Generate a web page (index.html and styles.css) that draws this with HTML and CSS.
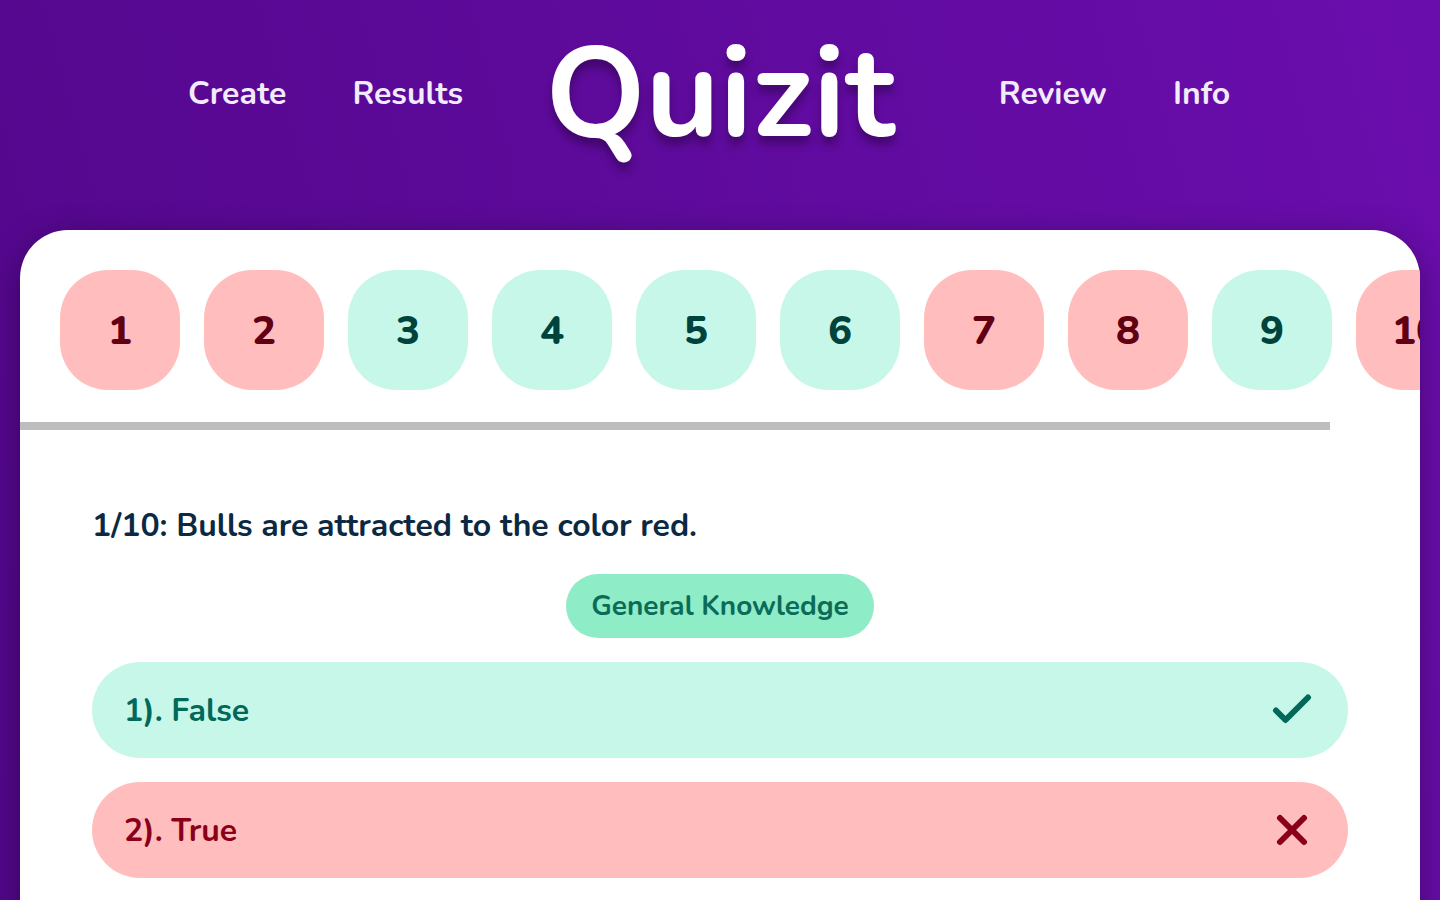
FILE: index.html
```html
<!DOCTYPE html>
<html lang="en">
<head>
<meta charset="utf-8">
<meta name="viewport" content="width=device-width, initial-scale=1">
<title>Quizit</title>
<link rel="stylesheet" href="styles.css">
</head>
<body>
<header class="header">
  <nav class="nav nav-left" aria-label="Quizzes">
    <a href="#create">Create</a>
    <a href="#results">Results</a>
  </nav>
  <h1 class="logo">Quizit</h1>
  <nav class="nav nav-right" aria-label="More">
    <a href="#review">Review</a>
    <a href="#info">Info</a>
  </nav>
</header>
<main class="card">
  <div class="strip">
    <button class="tile wrong" type="button">1</button>
    <button class="tile wrong" type="button">2</button>
    <button class="tile right" type="button">3</button>
    <button class="tile right" type="button">4</button>
    <button class="tile right" type="button">5</button>
    <button class="tile right" type="button">6</button>
    <button class="tile wrong" type="button">7</button>
    <button class="tile wrong" type="button">8</button>
    <button class="tile right" type="button">9</button>
    <button class="tile wrong" type="button">10</button>
  </div>
  <div class="track"><div class="thumb"></div></div>
  <section class="question">
    <h2 class="prompt">1/10: Bulls are attracted to the color red.</h2>
    <p class="category">General Knowledge</p>
    <ul class="answers">
      <li class="answer right">
        <span>1). False</span>
        <svg class="mark" viewBox="0 0 40 40" aria-hidden="true"><path d="M4 20.500 13.500 30 36 7.500"/></svg>
      </li>
      <li class="answer wrong">
        <span>2). True</span>
        <svg class="mark" viewBox="0 0 40 40" aria-hidden="true"><path d="M8 8 32 32M32 8 8 32"/></svg>
      </li>
    </ul>
  </section>
</main>
</body>
</html>
```
FILE: styles.css
```css
* {
  box-sizing: border-box;
}

body {
  margin: 0;
  min-height: 100vh;
  display: flex;
  flex-direction: column;
  overflow-x: hidden;
  font-family: Nunito, "Open Sans", sans-serif;
  color: #0b2942;
  background: linear-gradient(75deg, #52078a, #6a0dad);
}

.header {
  display: grid;
  grid-template-columns: 1fr auto 1fr;
  align-items: start;
  padding: 14px 0 56px;
}

.nav {
  display: flex;
  gap: 66px;
  padding-top: 58px;
}

.nav-left {
  justify-content: flex-end;
  padding-right: 82px;
}

.nav-right {
  padding-left: 104px;
}

.nav a {
  font-size: 32px;
  line-height: 44px;
  font-weight: 700;
  color: #f2ebfe;
  text-decoration: none;
}

.logo {
  margin: 0;
  font-size: 128px;
  line-height: 160px;
  font-weight: 700;
  color: #fff;
  text-shadow: 0 8px 8px rgba(0, 0, 0, 0.3);
}

.card {
  flex: 1;
  margin: 0 20px;
  overflow: hidden;
  background: #fff;
  border-radius: 48px 48px 0 0;
  box-shadow: 0 8px 32px rgba(0, 0, 0, 0.35);
}

.strip {
  display: flex;
  gap: 24px;
  padding: 40px 40px 32px;
}

.tile {
  flex: none;
  width: 120px;
  height: 120px;
  padding: 2px 0 0;
  border: 0;
  border-radius: 48px;
  font-family: inherit;
  font-size: 40px;
  font-weight: 800;
  cursor: pointer;
}

.right {
  background: #c6f7e8;
  color: #01685a;
}

.wrong {
  background: #ffbdbd;
  color: #8a0019;
}

.tile.right {
  color: #00433d;
}

.tile.wrong {
  color: #610013;
}

.track {
  height: 8px;
  padding-right: 90px;
}

.thumb {
  height: 8px;
  background: #bdbdbd;
}

.question {
  padding: 72px;
}

.prompt {
  margin: 0 0 24px;
  font-size: 32px;
  line-height: 48px;
  font-weight: 700;
}

.category {
  width: fit-content;
  margin: 0 auto 24px;
  padding: 0 25px;
  border-radius: 32px;
  background: #8eedc7;
  color: #0c6b58;
  font-size: 28px;
  line-height: 64px;
  font-weight: 700;
}

.answers {
  display: grid;
  gap: 24px;
  margin: 0;
  padding: 0;
  list-style: none;
}

.answer {
  display: flex;
  align-items: center;
  justify-content: space-between;
  height: 96px;
  padding: 0 36px 0 32px;
  border-radius: 48px;
  font-size: 32px;
  font-weight: 700;
}

.mark {
  width: 40px;
  height: 40px;
  fill: none;
  stroke: currentColor;
  stroke-width: 6px;
  stroke-linecap: round;
  stroke-linejoin: round;
}
```
